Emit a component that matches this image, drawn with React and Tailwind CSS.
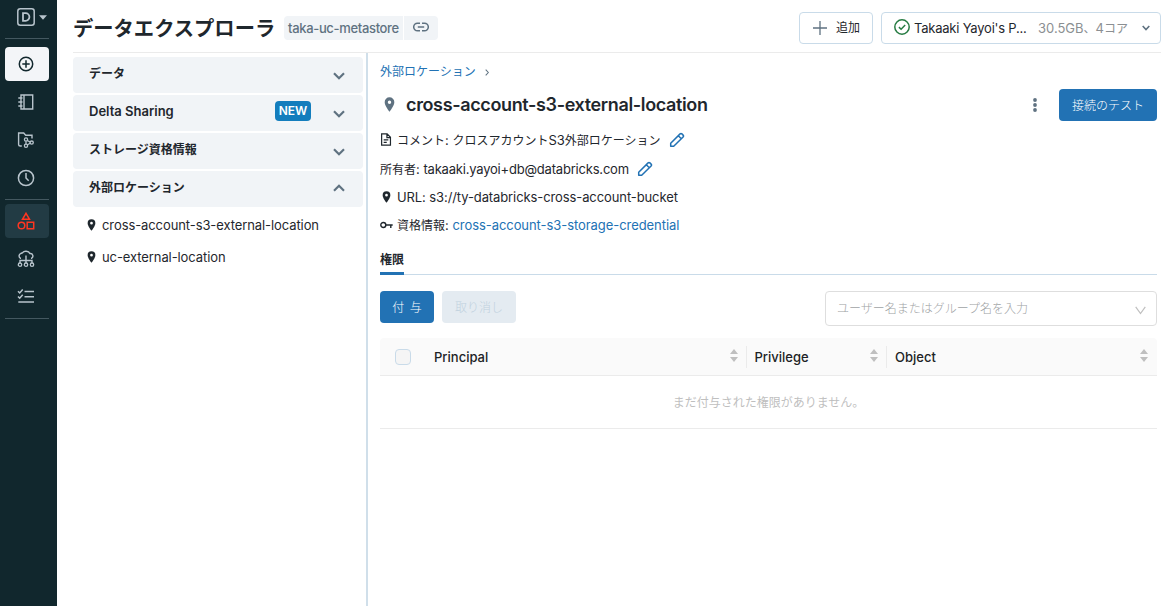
const CJK = "font-['Inter','Noto_Sans_CJK_JP',sans-serif]";

function Jp({ children, className = "" }) {
  return <span className={`text-[12px] ${className || "font-normal tracking-normal"}`}>{children}</span>;
}

function Pin({ className }) {
  return (
    <svg viewBox="0 0 10 14" className={className} fill="currentColor" fillRule="evenodd">
      <path d="M5 .3A4.500 4.500 0 0 0 .5 4.900C.5 8.200 5 13.700 5 13.700S9.500 8.200 9.500 4.900A4.500 4.500 0 0 0 5 .3ZM5 3.300a1.600 1.600 0 1 1 0 3.200a1.600 1.600 0 0 1 0-3.200Z" />
    </svg>
  );
}

function Pencil() {
  return (
    <svg viewBox="0 0 16 16" className="size-4 shrink-0 text-[#2272b4]" fill="none" stroke="currentColor" strokeWidth="1.500" strokeLinejoin="round">
      <path d="M1.700 14.300V11.300L11.100 1.900a1.300 1.300 0 0 1 1.800 0L14.100 3.100a1.300 1.300 0 0 1 0 1.800L4.700 14.300ZM9.300 3.700L12.300 6.700" />
    </svg>
  );
}

function Chevron({ up }) {
  return (
    <svg viewBox="0 0 12 8" className="h-2 w-3" fill="none" stroke="#5f7281" strokeWidth="2.200">
      <path d={up ? "M1 6.700L6 1.800L11 6.700" : "M1 1.300L6 6.200L11 1.300"} />
    </svg>
  );
}

function Sorter() {
  return (
    <svg viewBox="0 0 8 13" className="h-[13px] w-2" fill="#bfbfbf">
      <path d="M4 0L8 5H0ZM0 8H8L4 13Z" />
    </svg>
  );
}

function NavIcon({ children, className = "" }) {
  return (
    <svg viewBox="0 0 18 18" className={`size-[18px] ${className}`} fill="none" stroke="currentColor" strokeWidth="1.500">
      {children}
    </svg>
  );
}

function Sidebar() {
  return (
    <nav className="flex h-full w-[57px] shrink-0 flex-col bg-[#11272d] pl-[5px] text-[#b8c4cc]">
      <div className="flex h-[38px] w-11 items-start gap-1 pt-2 pl-3">
        <svg viewBox="0 0 18 18" className="size-[18px] shrink-0" fill="none" stroke="currentColor" strokeWidth="1.500">
          <rect x="0.800" y="0.800" width="16.400" height="16.400" rx="2.500" />
          <path d="M6 5.200H8.600a3.800 3.800 0 0 1 0 7.600H6Z" strokeWidth="1.800" />
        </svg>
        <svg viewBox="0 0 8 5" className="mt-[7px] h-[5px] w-2 shrink-0" fill="currentColor">
          <path d="M0 .3H8L4 4.800Z" />
        </svg>
      </div>
      <div className="h-px w-11 bg-[#445860]" />
      <div className="mt-2 flex h-[34px] w-11 items-center justify-center rounded bg-[#f3f5f8] text-[#11272d]">
        <NavIcon className="-translate-x-px"><circle cx="9" cy="9" r="6.700" /><path d="M9 5.300V12.700M5.300 9H12.700" /></NavIcon>
      </div>
      <div className="mt-1 flex h-[34px] w-11 items-center justify-center">
        <NavIcon className="-translate-x-px">
          <path d="M4 2H15.700V16H4ZM7 2V16M1.300 5H5.500M1.300 9H5.500M1.300 13H5.500" strokeWidth="1.400" />
        </NavIcon>
      </div>
      <div className="mt-1 flex h-[34px] w-11 items-center justify-center">
        <NavIcon className="-translate-x-px">
          <path d="M4.800 15H3.200Q1.600 15 1.600 13.500V2H6.700L8.700 4.300H15V7.500" strokeWidth="1.400" />
          <g strokeWidth="1.300">
            <circle cx="9" cy="8.500" r="1.600" /><circle cx="9" cy="14.700" r="1.600" /><circle cx="14.700" cy="11.600" r="1.600" />
            <path d="M9 10.200V13M10.300 9.500L13.300 11.100M10.300 13.800L13.300 12.200" />
          </g>
        </NavIcon>
      </div>
      <div className="mt-1 flex h-[34px] w-11 items-center justify-center">
        <NavIcon className="-translate-x-px"><circle cx="9" cy="9" r="7.600" /><path d="M9 4V9L11.700 11.700" /></NavIcon>
      </div>
      <div className="mt-1 h-px w-11 bg-[#445860]" />
      <div className="mt-1 flex h-[34px] w-11 items-center justify-center rounded bg-[#223b44] text-[#ff3621]">
        <NavIcon className="-translate-x-px">
          <path d="M9 1.300L12.500 7.300H5.500ZM10.200 10.200H16.700V16.700H10.200Z" /><circle cx="4.500" cy="13.500" r="3.300" />
        </NavIcon>
      </div>
      <div className="mt-1 flex h-[34px] w-11 items-center justify-center">
        <NavIcon className="-translate-x-px">
          <path d="M4 8.300H3.500A2.500 2.500 0 0 1 3.700 3.700C4.500 2.600 5.300 3.200 5.600 2.600C7 .6 11.500.6 13 3.600A2.500 2.500 0 0 1 14.500 8.300H14M9 5.500V13M3 13V10.500H15V13" strokeWidth="1.400" />
          <g strokeWidth="1.300"><circle cx="3" cy="14.700" r="1.700" /><circle cx="9" cy="14.700" r="1.700" /><circle cx="15" cy="14.700" r="1.700" /></g>
        </NavIcon>
      </div>
      <div className="mt-[3px] flex h-[34px] w-11 items-center justify-center">
        <NavIcon className="-translate-x-px">
          <path d="M7.500 4.500H17M7.500 9.800H17M1.300 15H17M1 4.300L2.700 6L5.700 2.500M1 9.500L2.700 11.200L5.700 7.700" />
        </NavIcon>
      </div>
      <div className="mt-[5px] h-px w-11 bg-[#445860]" />
    </nav>
  );
}

function Header() {
  return (
    <header className="flex h-[53px] shrink-0 items-center border-b border-[#ebebeb] pt-1">
      <h1 className="w-[211px] pt-0.5 text-[20.3px] font-bold whitespace-nowrap">データエクスプローラ</h1>
      <div className="flex h-6 overflow-hidden rounded bg-[#f1f4f7] font-medium text-[#5f7281]">
        <div className="flex w-[120px] items-center border-r border-white pl-1 tracking-[-0.33px] whitespace-nowrap">taka-uc-metastore</div>
        <div className="flex w-[34px] items-center justify-center">
          <svg viewBox="0 0 16 10" className="-mt-0.5 h-[10px] w-4" fill="none" stroke="currentColor" strokeWidth="1.500">
            <path d="M7 1.200H4.500a3.800 3.800 0 0 0 0 7.600H7M9 1.200h2.500a3.800 3.800 0 0 1 0 7.600H9M4.800 5H11.200" />
          </svg>
        </div>
      </div>
      <button className="ml-auto flex h-8 w-[74px] items-center rounded border border-[#c9dbe9] pl-[13px]">
        <svg viewBox="0 0 14 14" className="mr-[9px] size-3.5" fill="none" stroke="#5f7281" strokeWidth="1.300"><path d="M7 0V14M0 7H14" /></svg>
        <Jp>追加</Jp>
      </button>
      <button className="ml-2 flex h-8 w-[280px] items-center rounded border border-[#c9dbe9] pl-3 whitespace-nowrap">
        <svg viewBox="0 0 16 16" className="-mt-0.5 size-4 shrink-0" fill="none" stroke="#277c43" strokeWidth="1.500">
          <circle cx="8" cy="8" r="7.200" /><path d="M4.900 8.100L7.100 10.200L11.200 6" />
        </svg>
        <span className="ml-1 w-[124px] text-left tracking-[-0.22px]">Takaaki Yayoi's P...</span>
        <span className="text-[#8b8f92]">30.5GB<Jp>、</Jp>4<Jp>コア</Jp></span>
        <svg viewBox="0 0 8 6" className="mr-[10px] ml-auto h-1.5 w-2" fill="none" stroke="#5f7281" strokeWidth="1.600"><path d="M.7 1L4 4.500L7.300 1" /></svg>
      </button>
    </header>
  );
}

function Section({ children, badge, up }) {
  return (
    <div className="flex h-9 items-center rounded bg-[#f1f4f7] pr-[18px] pb-[3px] pl-4 font-bold">
      {children}
      {badge && <span className="mr-[22px] -mt-px ml-auto flex h-5 w-9 items-center justify-center rounded bg-[#137dbd] text-[12px] font-semibold text-white">NEW</span>}
      <span className={`${badge ? "" : "ml-auto"} ${up ? "pt-px" : "pt-1"}`}><Chevron up={up} /></span>
    </div>
  );
}

function Catalog() {
  return (
    <aside className="flex w-[290px] shrink-0 flex-col gap-0.5 pt-1">
      <Section><Jp className="font-bold">データ</Jp></Section>
      <Section badge><span className="-mt-0.5 font-semibold">Delta Sharing</span></Section>
      <Section><Jp className="font-bold">ストレージ資格情報</Jp></Section>
      <Section up><Jp className="font-bold">外部ロケーション</Jp></Section>
      <ul className="pl-[14px] tracking-[-0.09px]">
        <li className="flex h-8 items-center"><Pin className="mr-[6px] h-3 w-[9px]" /><span>cross-account-s3-external-location</span></li>
        <li className="flex h-8 items-center"><Pin className="mr-[6px] h-3 w-[9px]" /><span>uc-external-location</span></li>
      </ul>
    </aside>
  );
}

function Detail() {
  return (
    <main className="ml-[3px] flex grow flex-col border-l-2 border-[#d0dfea] pr-1 pl-3">
      <div className="flex h-9 items-center pt-px text-[#2272b4]">
        <Jp>外部ロケーション</Jp>
        <svg viewBox="0 0 4 8" className="mt-0.5 ml-[9px] h-[7px] w-1" fill="none" stroke="#5f7281" strokeWidth="1.200"><path d="M.5.7L3.500 4L.5 7.300" /></svg>
      </div>
      <div className="flex h-8 items-center">
        <Pin className="mr-[11px] -mt-0.5 ml-1 h-[15px] w-[11px] text-[#5f7281]" />
        <h2 className="-mt-px text-[18px] font-semibold tracking-[-0.36px] text-[#1f272d]">cross-account-s3-external-location</h2>
        <svg viewBox="0 0 4 14" className="ml-auto h-3.5 w-1" fill="#5f7281"><circle cx="2" cy="2" r="1.900" /><circle cx="2" cy="7" r="1.900" /><circle cx="2" cy="12" r="1.900" /></svg>
        <button className="ml-[22px] h-8 w-[98px] rounded bg-[#2272b4] text-white"><Jp className="font-light">接続のテスト</Jp></button>
      </div>
      <div className="mt-1 flex h-[30px] items-center">
        <svg viewBox="0 0 12 14" className="mr-[5px] -mt-px h-[13px] w-3" fill="none" stroke="currentColor" strokeWidth="1.300">
          <path d="M1.300 1H7.200L10.800 4.600V13H1.300ZM7 1V5H10.800M3.500 7.300H8.500M3.500 10H6.800" />
        </svg>
        <span className="mr-2"><Jp>コメント</Jp>: <Jp>クロスアカウント</Jp>S3<Jp>外部ロケーション</Jp></span>
        <Pencil />
      </div>
      <div className="flex h-7 items-center"><span className="mr-2"><Jp>所有者</Jp>: <span className="tracking-[-0.2px]">takaaki.yayoi+db@databricks.com</span></span><Pencil /></div>
      <div className="flex h-7 items-center"><Pin className="mr-[6px] ml-0.5 h-3 w-[9px]" /><span className="tracking-[-0.1px]">URL: s3://ty-databricks-cross-account-bucket</span></div>
      <div className="flex h-7 items-center">
        <svg viewBox="0 0 13 8" className="mr-1 h-2 w-[13px]" fill="none" stroke="currentColor" strokeWidth="1.400"><circle cx="3.300" cy="4" r="2.500" /><path d="M5.800 4H12.700M10.800 4V7" /></svg>
        <span><Jp>資格情報</Jp>: <span className="tracking-[-0.06px] text-[#2272b4]">cross-account-s3-storage-credential</span></span>
      </div>
      <div className="mt-[6px] flex h-[30px] border-b border-[#c9dbe9]">
        <div className="h-[30px] border-b-[3px] border-[#2272b4] font-bold"><Jp className="block leading-[30px] font-bold">権限</Jp></div>
      </div>
      <div className="mt-4 flex h-[35px] gap-2">
        <button className="h-8 w-[54px] rounded bg-[#2272b4] text-white"><Jp className="pl-px font-light tracking-[1px]">付 与</Jp></button>
        <button className="h-8 w-[74px] rounded bg-[#e4ebf1] text-[#c0d1de]"><Jp className="font-light">取り消し</Jp></button>
        <div className="ml-auto flex h-[35px] w-[332px] items-center rounded border border-[#dedede] pr-[10.5px] pl-[11px] text-[#a0a3a5]">
          <Jp className="font-light">ユーザー名またはグループ名を入力</Jp>
          <svg viewBox="0 0 11 9" className="mt-[3px] ml-auto h-[9px] w-[11px]" fill="none" stroke="#bfbfbf" strokeWidth="1.200"><path d="M.7.8L5.500 7.500L10.300.8" /></svg>
        </div>
      </div>
      <div className="mt-3 flex h-[38px] items-center rounded-t border-b border-[#ebebeb] bg-[#fafafa] font-medium text-[#202225]">
        <div className="flex w-[54px] pl-[15px]"><span className="size-4 rounded border border-[#c9dbe9] bg-[#f5f5f5]" /></div>
        <div className="flex h-[22px] w-[313px] items-center justify-between border-r border-[#ebebeb] pr-[8.5px]">Principal<span className="-mt-0.5"><Sorter /></span></div>
        <div className="flex h-[22px] w-[140px] items-center justify-between border-r border-[#ebebeb] pr-[8.5px] pl-[7.5px]">Privilege<span className="-mt-0.5"><Sorter /></span></div>
        <div className="flex grow items-center justify-between pr-[9.500px] pl-2">Object<span className="-mt-0.5"><Sorter /></span></div>
      </div>
      <div className="flex h-[53px] items-center justify-center border-b border-[#ebebeb] pt-px text-[#bfbfbf]"><Jp>まだ付与された権限がありません。</Jp></div>
    </main>
  );
}

export default function App() {
  return (
    <div lang="ja" className={`${CJK} flex h-screen w-full overflow-hidden bg-white text-[13px] leading-5 text-[#1f272d]`}>
      <Sidebar />
      <div className="flex grow flex-col pr-[10px] pl-4">
        <Header />
        <div className="flex min-h-0 grow"><Catalog /><Detail /></div>
      </div>
    </div>
  );
}
